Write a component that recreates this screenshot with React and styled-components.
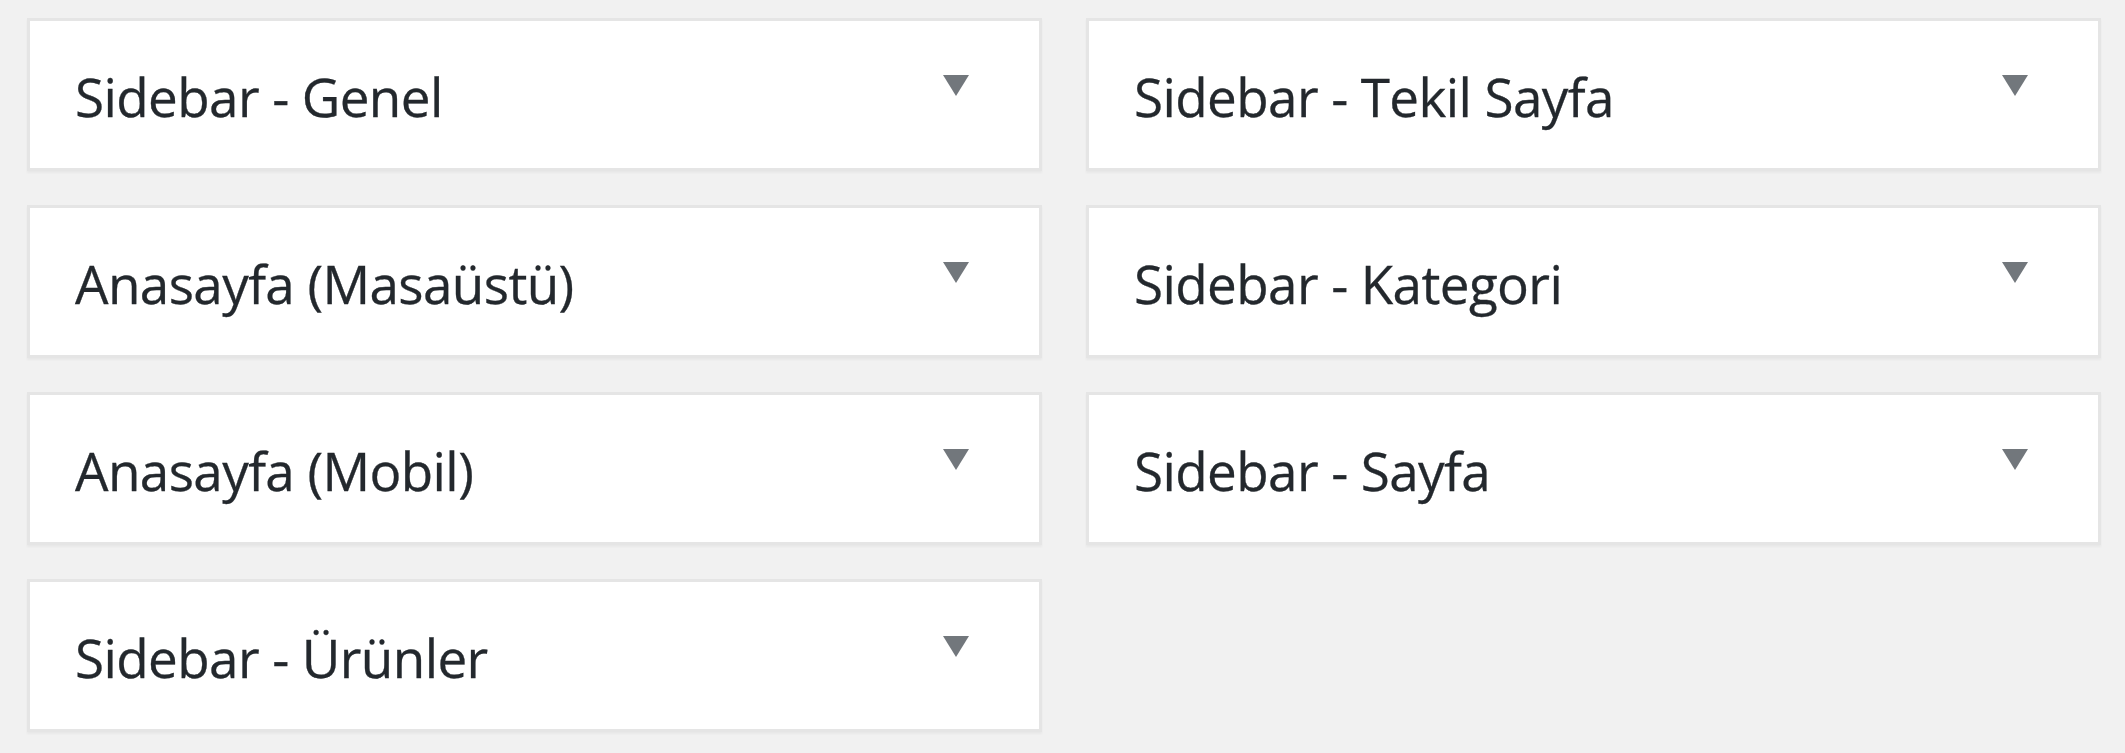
import React from 'react'
import styled, { createGlobalStyle } from 'styled-components'

const GlobalStyle = createGlobalStyle`
  html, body {
    margin: 0;
    padding: 0;
    background: #f1f1f1;
  }
  body {
    font-family: "Open Sans", "Noto Sans", sans-serif;
    color: #23282d;
  }
`;

const areas = [
  ['Sidebar - Genel', 'Sidebar - Tekil Sayfa'],
  ['Anasayfa (Masaüstü)', 'Sidebar - Kategori'],
  ['Anasayfa (Mobil)', 'Sidebar - Sayfa'],
  ['Sidebar - Ürünler', null],
];

function App() {
  return (
    <>
      <GlobalStyle />
      <Page>
        <Grid>
          {areas.flat().map((title, i) =>
            title ? (
              <WidgetArea key={i}>
                <Title>{title}</Title>
                <Toggle aria-label="Aç / Kapat" />
              </WidgetArea>
            ) : (
              <span key={i} />
            )
          )}
        </Grid>
      </Page>
    </>
  )
}

const Page = styled.div`
  width: 2125px;
  height: 753px;
  box-sizing: border-box;
  padding: 18px 24px 0 27px;
  background: #f1f1f1;
  overflow: hidden;
`;

const Grid = styled.div`
  display: grid;
  grid-template-columns: 1015px 1015px;
  grid-auto-rows: 153px;
  column-gap: 44px;
  row-gap: 34px;
`;

const WidgetArea = styled.div`
  position: relative;
  box-sizing: border-box;
  background: #fff;
  border: 3px solid #e5e5e5;
  box-shadow: 0 2px 2px rgba(0, 0, 0, 0.04);
  display: flex;
  align-items: center;
  padding: 3px 0 0 45px;
`;

const Title = styled.h2`
  margin: 0;
  font-size: 53px;
  font-weight: 400;
  letter-spacing: -0.6px;
  color: #23282d;
  white-space: nowrap;
  -webkit-text-stroke: 0.3px #23282d;
`;

const Toggle = styled.span`
  position: absolute;
  top: 54px;
  right: 70px;
  width: 0;
  height: 0;
  border-left: 13px solid transparent;
  border-right: 13px solid transparent;
  border-top: 21px solid #72777c;
`;

export default App
